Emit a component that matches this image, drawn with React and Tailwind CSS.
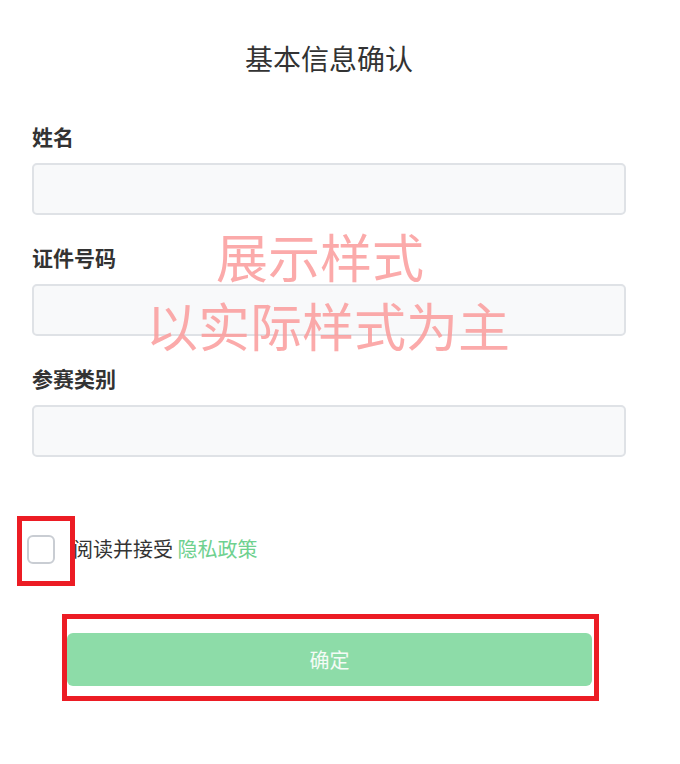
import { useState } from 'react';

const fields = ['姓名', '证件号码', '参赛类别'];

function App() {
  const [agree, setAgree] = useState(false);

  return (
    <div className="relative w-[680px] min-h-[764px] bg-white text-[#333] font-['Noto_Sans_CJK_SC','Noto_Sans',sans-serif]">
      <h1 className="pt-[38px] text-center pr-[22px] text-[28px] leading-[40px] font-normal text-[#333]">
        基本信息确认
      </h1>

      <div className="ml-[32px] w-[594px] mt-[43px]">
        {fields.map((label, i) => (
          <div key={label} className={i > 0 ? 'mt-[27px]' : ''}>
            <div className="text-[21px] leading-[30px] font-bold text-[#333]">{label}</div>
            <input
              type="text"
              className="mt-[12px] block w-full h-[52px] rounded-[5px] border-2 border-[#dfe2e6] bg-[#f8f9fa] px-3 text-[18px] outline-none"
            />
          </div>
        ))}
      </div>

      <div className="ml-[17px] mt-[59px] flex items-center">
        <div className="w-[58px] h-[70px] border-[5px] border-[#ec1c24] flex items-center pl-[5px] pb-[3px]">
          <button
            type="button"
            onClick={() => setAgree(!agree)}
            className="w-[28px] h-[29px] rounded-[6px] border-2 border-[#c9cdd3] bg-white"
          />
        </div>
        <span className="-ml-[2px] mb-[5px] text-[20px] leading-[28px] text-[#333]">
          阅读并接受 <span className="text-[#6fd18f]">隐私政策</span>
        </span>
      </div>

      <div className="ml-[62px] mt-[28px] w-[537px] h-[87px] border-[5px] border-[#ec1c24] pt-[14px]">
        <button
          type="button"
          className="w-[525px] h-[53px] rounded-[6px] bg-[#8ddca8] text-[20px] text-[#f4fbf6]"
        >
          确定
        </button>
      </div>

      <div className="absolute left-[146px] top-[221px] text-[52px] leading-[69px] text-[#fb9c9c] opacity-85 pointer-events-none">
        <div className="pl-[70px]">展示样式</div>
        <div>以实际样式为主</div>
      </div>
    </div>
  );
}

export default App;
